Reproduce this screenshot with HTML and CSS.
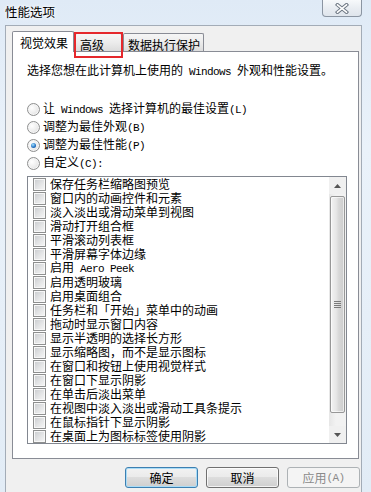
FILE: index.html
```html
<!DOCTYPE html>
<html lang="zh-CN">
<head>
<meta charset="utf-8">
<title>性能选项</title>
<link rel="stylesheet" href="styles.css">
</head>
<body>
<div class="titlebar">
  <div class="title">性能选项</div>
  <div class="close">
    <svg width="14" height="11" viewBox="0 0 14 11">
      <path d="M2.5 1.8 L11.5 9.2 M11.5 1.8 L2.5 9.2" stroke="#6e7884" stroke-width="3.6" stroke-linecap="square" fill="none"/>
      <path d="M2.5 1.8 L11.5 9.2 M11.5 1.8 L2.5 9.2" stroke="#ffffff" stroke-width="1.6" stroke-linecap="square" fill="none"/>
    </svg>
  </div>
</div>
<div class="window">
  <div class="tabs">
    <div class="tab active">视觉效果</div>
    <div class="tab t2">高级<span class="mark"></span></div>
    <div class="tab t3">数据执行保护</div>
  </div>
  <div class="panel">
    <p class="desc">选择您想在此计算机上使用的<span class="lat"> Windows </span>外观和性能设置。</p>
    <div class="radios">
      <div class="radio"><span class="rb"></span><span class="txt">让<span class="lat"> Windows </span>选择计算机的最佳设置<span class="lat">(L)</span></span></div>
      <div class="radio"><span class="rb"></span><span class="txt">调整为最佳外观<span class="lat">(B)</span></span></div>
      <div class="radio"><span class="rb on"></span><span class="txt">调整为最佳性能<span class="lat">(P)</span></span></div>
      <div class="radio"><span class="rb"></span><span class="txt">自定义<span class="lat">(C):</span></span></div>
    </div>
    <div class="listbox">
      <ul class="items">
        <li><span class="cb"></span><span class="txt">保存任务栏缩略图预览</span></li>
        <li><span class="cb"></span><span class="txt">窗口内的动画控件和元素</span></li>
        <li><span class="cb"></span><span class="txt">淡入淡出或滑动菜单到视图</span></li>
        <li><span class="cb"></span><span class="txt">滑动打开组合框</span></li>
        <li><span class="cb"></span><span class="txt">平滑滚动列表框</span></li>
        <li><span class="cb"></span><span class="txt">平滑屏幕字体边缘</span></li>
        <li><span class="cb"></span><span class="txt">启用<span class="lat"> Aero Peek</span></span></li>
        <li><span class="cb"></span><span class="txt">启用透明玻璃</span></li>
        <li><span class="cb"></span><span class="txt">启用桌面组合</span></li>
        <li><span class="cb"></span><span class="txt">任务栏和「开始」菜单中的动画</span></li>
        <li><span class="cb"></span><span class="txt">拖动时显示窗口内容</span></li>
        <li><span class="cb"></span><span class="txt">显示半透明的选择长方形</span></li>
        <li><span class="cb"></span><span class="txt">显示缩略图，而不是显示图标</span></li>
        <li><span class="cb"></span><span class="txt">在窗口和按钮上使用视觉样式</span></li>
        <li><span class="cb"></span><span class="txt">在窗口下显示阴影</span></li>
        <li><span class="cb"></span><span class="txt">在单击后淡出菜单</span></li>
        <li><span class="cb"></span><span class="txt">在视图中淡入淡出或滑动工具条提示</span></li>
        <li><span class="cb"></span><span class="txt">在鼠标指针下显示阴影</span></li>
        <li><span class="cb"></span><span class="txt">在桌面上为图标标签使用阴影</span></li>
      </ul>
      <div class="scrollbar">
        <div class="sb-btn">
          <svg width="7" height="4" viewBox="0 0 7 4"><path d="M0 4 L3.5 0 L7 4 Z" fill="#555"/></svg>
        </div>
        <div class="thumb">
          <svg width="7" height="8" viewBox="0 0 7 8"><path d="M0 0.5 H7 M0 2.5 H7 M0 4.5 H7 M0 6.5 H7" stroke="#7a7a7a" stroke-width="1"/></svg>
        </div>
        <div class="track"></div>
        <div class="sb-btn">
          <svg width="7" height="4" viewBox="0 0 7 4"><path d="M0 0 L3.5 4 L7 0 Z" fill="#555"/></svg>
        </div>
      </div>
    </div>
  </div>
  <div class="buttons">
    <div class="btn default">确定</div>
    <div class="btn">取消</div>
    <div class="btn disabled">应用<span class="lat">(A)</span></div>
  </div>
</div>
</body>
</html>
```
FILE: styles.css
```css
* { box-sizing: border-box; }
html, body { margin: 0; padding: 0; }
body {
  width: 371px;
  height: 492px;
  overflow: hidden;
  background: linear-gradient(180deg, #dfeaf6 0%, #eaf2fa 30%, #e2ecf6 100%);
  font-family: "Noto Sans CJK SC", "Noto Sans", sans-serif;
  font-size: 12px;
  color: #000;
}
.lat {
  font-family: "Liberation Mono", monospace;
  font-size: 11px;
  letter-spacing: -0.6px;
  white-space: pre;
}
.titlebar {
  height: 25px;
  display: flex;
  justify-content: space-between;
  align-items: flex-start;
}
.title {
  padding: 4px 0 0 5px;
  line-height: 16px;
  font-size: 12.5px;
  text-shadow: 0 0 5px #fff, 0 0 3px #fff;
}
.close {
  margin-right: 9px;
  width: 40px;
  height: 17px;
  border: 1px solid #8b95a2;
  border-top: none;
  border-radius: 0 0 4px 4px;
  background: linear-gradient(180deg, #f7f9fb 0%, #e9edf2 50%, #dfe5ec 100%);
  display: flex;
  align-items: center;
  justify-content: center;
}
.window {
  margin-left: 5px;
  width: 357px;
  height: 467px;
  border: 1px solid #a3acb7;
  border-bottom: none;
  background: #f0f0f0;
  padding: 5px 1px 0 6px;
}
.tabs {
  display: flex;
  align-items: flex-end;
  height: 20px;
}
.tab {
  position: relative;
  height: 18px;
  border: 1px solid #898c95;
  border-bottom: none;
  border-radius: 2px 2px 0 0;
  background: linear-gradient(180deg, #f6f6f6 0%, #ececec 50%, #dcdcdc 100%);
  padding: 4px 0 0 4px;
  line-height: 14px;
  white-space: nowrap;
}
.tab.active {
  z-index: 1;
  width: 62px;
  height: 21px;
  margin-bottom: -1px;
  background: #fff;
  padding: 4px 0 0 7px;
}
.tab.t2 { width: 47px; margin-left: 1px; }
.tab.t3 { width: 81px; margin-left: 1px; }
.mark {
  position: absolute;
  left: -2px;
  top: -2px;
  width: 49px;
  height: 26px;
  border: 2px solid #e5282c;
}
.panel {
  width: 347px;
  height: 408px;
  border: 1px solid #898c95;
  background: #fff;
  padding: 11px 11px 0 14px;
}
.desc {
  margin: 0;
  height: 14px;
  line-height: 14px;
  white-space: nowrap;
}
.radios { margin-top: 23px; }
.radio {
  display: flex;
  align-items: center;
  height: 18px;
  line-height: 14px;
  white-space: nowrap;
}
.rb {
  width: 13px;
  height: 13px;
  margin-right: 3px;
  border-radius: 50%;
  border: 1px solid #8e8f8f;
  background: radial-gradient(circle at 35% 35%, #ffffff 0%, #ececec 55%, #cfcfcf 100%);
  box-shadow: inset 0 0 0 1px #f6f6f6;
  display: flex;
  align-items: center;
  justify-content: center;
  flex: none;
}
.rb.on::after {
  content: "";
  width: 5px;
  height: 5px;
  border-radius: 50%;
  background: radial-gradient(circle at 40% 35%, #a8e4ff 0%, #2a78c8 55%, #0d3f80 100%);
}
.listbox {
  margin-top: 4px;
  width: 320px;
  height: 268px;
  border: 1px solid #828790;
  background: #fff;
  display: flex;
}
.items {
  list-style: none;
  margin: 0;
  padding: 0 0 0 5px;
  flex: 1;
}
.items li {
  height: 14px;
  display: flex;
  align-items: center;
  line-height: 14px;
  white-space: nowrap;
}
.cb {
  width: 13px;
  height: 13px;
  margin-right: 4px;
  flex: none;
  border: 1px solid #8e8f8f;
  background: linear-gradient(135deg, #c9cbce 0%, #e4e5e6 55%, #f7f7f7 100%);
  box-shadow: inset 0 0 0 1px #f7f7f7;
}
.scrollbar {
  width: 17px;
  flex: none;
  display: flex;
  flex-direction: column;
  background: linear-gradient(90deg, #e6e6e6 0%, #f2f2f2 40%, #f2f2f2 100%);
}
.sb-btn {
  height: 17px;
  flex: none;
  display: flex;
  align-items: center;
  justify-content: center;
  background: #f0f0f0;
}
.thumb {
  margin: 2px 1px 0 1px;
  height: 217px;
  flex: none;
  border: 1px solid #979797;
  border-radius: 2px;
  background: linear-gradient(90deg, #f3f3f3 0%, #e6e6e6 40%, #d8d8d8 60%, #cdcdcd 100%);
  box-shadow: inset 0 0 0 1px rgba(255,255,255,0.6);
  display: flex;
  align-items: center;
  justify-content: center;
}
.track { flex: 1; }
.buttons {
  display: flex;
  justify-content: flex-end;
  gap: 8px;
  margin-top: 8px;
}
.btn {
  width: 73px;
  height: 21px;
  border: 1px solid #707070;
  border-radius: 3px;
  background: linear-gradient(180deg, #f2f2f2 0%, #ebebeb 45%, #dddddd 50%, #cfcfcf 100%);
  box-shadow: inset 0 0 0 1px rgba(255,255,255,0.75);
  display: flex;
  align-items: center;
  justify-content: center;
  line-height: 14px;
  white-space: nowrap;
}
.btn.default {
  border-color: #3c7fb1;
  box-shadow: inset 0 0 0 1px #a9dcf7;
}
.btn.disabled {
  border-color: #adb2b5;
  background: #f4f4f4;
  box-shadow: none;
  color: #8a8a8a;
}
```
